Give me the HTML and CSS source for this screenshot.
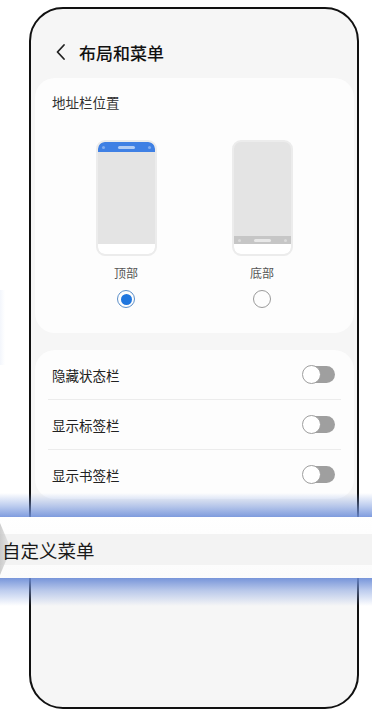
FILE: index.html
```html
<!DOCTYPE html>
<html lang="zh-CN">
<head>
<meta charset="utf-8">
<title>布局和菜单</title>
<link rel="stylesheet" href="styles.css">
</head>
<body>
<div class="edge-glow"></div>
<div class="frame">
  <div class="header">
    <svg class="back" width="12" height="18" viewBox="0 0 12 18"><path d="M9 2 L2.5 9 L9 16" fill="none" stroke="#222" stroke-width="1.8" stroke-linecap="round" stroke-linejoin="round"/></svg>
    <span class="title">布局和菜单</span>
  </div>
  <div class="card card-pos">
    <div class="section-title">地址栏位置</div>
    <div class="options">
      <div class="option">
        <div class="phone">
          <div class="bar bar-top"><span class="dot"></span><span class="pill"></span><span class="dot"></span></div>
          <div class="screen"></div>
          <div class="foot"></div>
        </div>
        <div class="opt-label">顶部</div>
        <div class="radio radio-on"><span></span></div>
      </div>
      <div class="option">
        <div class="phone">
          <div class="screen"></div>
          <div class="bar bar-bottom"><span class="dot"></span><span class="pill"></span><span class="dot"></span></div>
          <div class="foot"></div>
        </div>
        <div class="opt-label">底部</div>
        <div class="radio"></div>
      </div>
    </div>
  </div>
  <div class="card card-list">
    <div class="row"><span>隐藏状态栏</span><span class="toggle"><span class="knob"></span></span></div>
    <div class="divider"></div>
    <div class="row"><span>显示标签栏</span><span class="toggle"><span class="knob"></span></span></div>
    <div class="divider"></div>
    <div class="row"><span>显示书签栏</span><span class="toggle"><span class="knob"></span></span></div>
  </div>
</div>
<div class="overlay">
  <div class="glow-top"></div>
  <div class="band">
    <div class="strip"><span class="strip-text">自定义菜单</span></div>
    <div class="tab"></div>
  </div>
  <div class="glow-bottom"></div>
</div>
</body>
</html>
```
FILE: styles.css
```css
html, body {
  margin: 0;
  padding: 0;
}
body {
  width: 372px;
  height: 720px;
  overflow: hidden;
  background: #ffffff;
  font-family: "Noto Sans CJK SC", "Noto Sans", sans-serif;
  position: relative;
}
.frame {
  box-sizing: border-box;
  margin: 7px 0 0 29px;
  width: 330px;
  height: 702px;
  border: 2px solid #111;
  border-radius: 34px;
  background: #f6f6f6;
  padding: 21px 3px 0 4px;
  overflow: hidden;
}
.header {
  height: 44px;
  display: flex;
  align-items: center;
  padding-left: 20px;
}
.back {
  display: block;
}
.title {
  margin-left: 12px;
  font-size: 17px;
  font-weight: 500;
  color: #111;
}
.card {
  background: #fdfdfd;
  border-radius: 20px;
}
.card-pos {
  margin-top: 4px;
  padding: 15px 17px 24px 17px;
  height: 255px;
  box-sizing: border-box;
}
.section-title {
  font-size: 13.5px;
  line-height: 18px;
  color: #333;
}
.options {
  display: flex;
  justify-content: center;
  gap: 56px;
  margin-top: 29px;
  padding-right: 1px;
}
.option {
  width: 80px;
  display: flex;
  flex-direction: column;
  align-items: center;
}
.phone {
  box-sizing: border-box;
  width: 61px;
  height: 116px;
  border: 2px solid #ececec;
  border-radius: 9px;
  background: #e4e4e4;
  display: flex;
  flex-direction: column;
  overflow: hidden;
}
.screen {
  flex: 1;
}
.bar {
  height: 10px;
  display: flex;
  align-items: center;
  justify-content: space-between;
  padding: 0 4px;
}
.bar-top {
  background: #3f80e4;
  border-radius: 6px 6px 0 0;
}
.bar-bottom {
  background: #c6c6c6;
  height: 8px;
}
.bar .dot {
  width: 3px;
  height: 3px;
  border-radius: 50%;
  background: rgba(255,255,255,0.35);
}
.bar .pill {
  width: 17px;
  height: 3px;
  border-radius: 2px;
  background: rgba(255,255,255,0.6);
}
.foot {
  height: 10px;
  background: #ffffff;
  border-radius: 0 0 6px 6px;
}
.opt-label {
  margin-top: 9px;
  font-size: 12px;
  line-height: 16px;
  color: #555;
}
.radio {
  box-sizing: border-box;
  margin-top: 9px;
  width: 18px;
  height: 18px;
  border-radius: 50%;
  border: 1.5px solid #9a9a9a;
  display: flex;
  align-items: center;
  justify-content: center;
}
.radio-on {
  border: 1.5px solid #5b8fc9;
}
.radio-on span {
  width: 11px;
  height: 11px;
  border-radius: 50%;
  background: #1f76de;
}
.card-list {
  margin-top: 17px;
  padding: 0;
}
.row {
  height: 49px;
  display: flex;
  align-items: center;
  justify-content: space-between;
  padding: 0 19px 0 17px;
  font-size: 13.5px;
  color: #222;
}
.divider {
  height: 1px;
  background: #ececec;
  margin: 0 13px;
}
.toggle {
  position: relative;
  width: 32px;
  height: 17px;
  border-radius: 9px;
  background: #9f9f9f;
}
.knob {
  position: absolute;
  left: -1px;
  top: -1px;
  width: 19px;
  height: 19px;
  box-sizing: border-box;
  border-radius: 50%;
  background: #ffffff;
  border: 1.5px solid #9f9f9f;
}
.overlay {
  position: absolute;
  left: 0;
  top: 493px;
  width: 372px;
}
.glow-top {
  height: 24px;
  background: linear-gradient(to bottom, rgba(130,160,225,0) 0%, rgba(120,152,222,0.5) 55%, rgba(110,143,218,0.88) 100%);
}
.band {
  position: relative;
  height: 61px;
  background: linear-gradient(to bottom, #ffffff 0%, #fbfbfb 100%);
  display: flex;
  align-items: center;
}
.strip {
  width: 100%;
  height: 31px;
  margin-top: 4px;
  background: #f3f3f3;
  display: flex;
  align-items: center;
  padding-left: 2px;
  font-size: 18.5px;
  color: #1a1a1a;
}
.strip-text {
  position: relative;
  z-index: 2;
}
.tab {
  position: absolute;
  z-index: 1;
  left: 0;
  top: 6px;
  width: 11px;
  height: 52px;
  background: linear-gradient(to right, rgba(190,190,190,0.75), rgba(225,225,225,0.5));
  clip-path: polygon(0 0, 100% 50%, 0 100%);
}
.glow-bottom {
  height: 28px;
  background: linear-gradient(to bottom, rgba(105,138,214,0.9) 0%, rgba(125,155,222,0.5) 45%, rgba(150,175,230,0) 100%);
}
.edge-glow {
  position: absolute;
  left: 0;
  top: 290px;
  width: 5px;
  height: 75px;
  background: linear-gradient(to right, rgba(215,225,245,0.3), rgba(215,225,245,0));
}
```
